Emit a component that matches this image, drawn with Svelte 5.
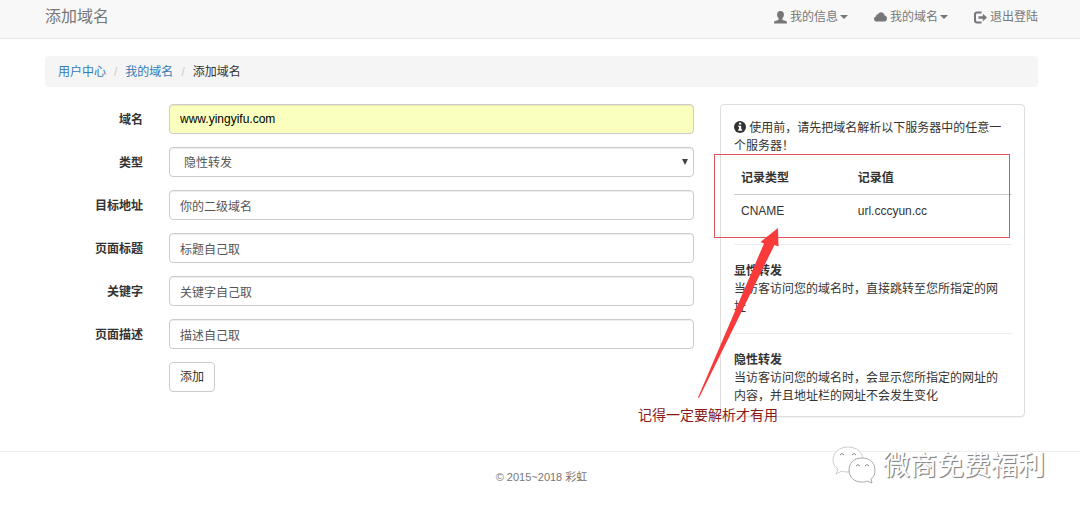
<script lang="ts">
	let domain = $state("www.yingyifu.com");
	let forwardType = $state("hidden");
	let target = $state("你的二级域名");
	let pageTitle = $state("标题自己取");
	let keywords = $state("关键字自己取");
	let description = $state("描述自己取");

	const records = [{ type: "CNAME", value: "url.cccyun.cc" }];

	function handleSubmit(e: SubmitEvent) {
		e.preventDefault();
	}
</script>

<header class="navbar">
	<div class="navbar-inner">
		<a class="brand" href="#top">添加域名</a>
		<nav class="nav">
			<a href="#info">
				<svg class="icon" viewBox="0 0 13 13" aria-hidden="true">
					<path
						d="M6.500 0C4.200 0 3.100 1.500 3.100 3.500c0 1.600.6 2.900 1.500 3.700v1.200C4.600 9.100 1.400 9.500.6 10.300c-.4.4-.6 1-.6 2.200h13c0-1.200-.2-1.800-.6-2.200-.8-.8-4-1.200-4-1.900V7.200c.9-.8 1.500-2.100 1.500-3.700C9.900 1.500 8.800 0 6.500 0z"
					/>
				</svg>
				<span>我的信息</span>
				<i class="caret"></i>
			</a>
			<a href="#domains">
				<svg class="icon" viewBox="0 0 13 13" aria-hidden="true">
					<path
						d="M2.800 10.500C1.200 10.500 0 9.400 0 7.900c0-1.300.9-2.300 2.100-2.500C2 3.900 3 3 4 3.200 4.600 1.900 5.700 1.200 7 1.200c2 0 3.500 1.500 3.600 3.400C12 4.700 13 5.900 13 7.400c0 1.700-1.300 3.100-2.900 3.100z"
					/>
				</svg>
				<span>我的域名</span>
				<i class="caret"></i>
			</a>
			<a href="#logout">
				<svg class="icon" viewBox="0 0 13 13" aria-hidden="true">
					<path
						d="M7.600 1.600H3.200C1.900 1.600 1 2.500 1 3.800v5.400c0 1.300.9 2.200 2.200 2.200h4.400"
						fill="none"
						stroke="currentColor"
						stroke-width="2"
					/>
					<path d="M4.500 5.300h4.300V2.800L13 6.500l-4.200 3.700V7.700H4.500z" />
				</svg>
				<span>退出登陆</span>
			</a>
		</nav>
	</div>
</header>

<main class="container">
	<ol class="breadcrumb">
		<li><a href="#home">用户中心</a></li>
		<li><a href="#domains">我的域名</a></li>
		<li>添加域名</li>
	</ol>

	<div class="columns">
		<form class="domain-form" onsubmit={handleSubmit}>
			<label for="domain">域名</label>
			<input id="domain" class="autofilled" type="text" bind:value={domain} />

			<label for="type">类型</label>
			<div class="select-wrap">
				<select id="type" bind:value={forwardType}>
					<option value="hidden">隐性转发</option>
					<option value="visible">显性转发</option>
				</select>
			</div>

			<label for="target">目标地址</label>
			<input id="target" type="text" bind:value={target} />

			<label for="title">页面标题</label>
			<input id="title" type="text" bind:value={pageTitle} />

			<label for="keywords">关键字</label>
			<input id="keywords" type="text" bind:value={keywords} />

			<label for="description">页面描述</label>
			<input id="description" type="text" bind:value={description} />

			<button type="submit">添加</button>
		</form>

		<aside class="panel">
			<p>
				<svg class="icon info" viewBox="0 0 12 12" aria-hidden="true">
					<circle cx="6" cy="6" r="6" />
					<path d="M5 1.800h2.200v1.800H5zM4.200 4.700h3v3.600h.9v1.400H4.200V8.300H5V6h-.8z" fill="#fff" />
				</svg>
				使用前，请先把域名解析以下服务器中的任意一个服务器！
			</p>

			<div class="records">
				<table>
					<thead>
						<tr><th>记录类型</th><th>记录值</th></tr>
					</thead>
					<tbody>
						{#each records as record}
							<tr><td>{record.type}</td><td>{record.value}</td></tr>
						{/each}
					</tbody>
				</table>
				<div class="highlight"></div>
			</div>

			<hr />
			<p>
				<strong>显性转发</strong><br />
				当访客访问您的域名时，直接跳转至您所指定的网址
			</p>
			<hr />
			<p>
				<strong>隐性转发</strong><br />
				当访客访问您的域名时，会显示您所指定的网址的内容，并且地址栏的网址不会发生变化
			</p>

			<svg class="arrow" viewBox="0 0 84 172" aria-hidden="true">
				<path d="M1 169.500 67 15.500 63.500 14 81 0l.5 18.500-4-1.500L72 28 2 170z" />
			</svg>
			<span class="note">记得一定要解析才有用</span>
		</aside>
	</div>
</main>

<footer class="footer">
	<p>© 2015~2018 彩虹</p>
	<div class="watermark">
		<svg viewBox="0 0 46 40" aria-hidden="true">
			<path
				class="bubble"
				d="M16 1C7 1 1 7 1 14c0 4 2 7 5 9l-2 5 6-3c2 1 4 1 6 1 9 0 15-5 15-12S25 1 16 1z"
			/>
			<path
				class="bubble front"
				d="M30 12c-8 0-13 5-13 12s5 12 13 12c2 0 4 0 5-1l5 2-1-4c3-2 4-5 4-9 0-7-5-12-13-12z"
			/>
			<path class="eye" d="M8 9q2-3 4 0M20 9q2-3 4 0M24 20q2-3 4 0M33 20q2-3 4 0" />
		</svg>
		<span>微商免费福利</span>
	</div>
</footer>

<style>
	:global(body) {
		background: #fff;
		color: #333;
		font-family: "Liberation Sans", "Noto Sans CJK SC", sans-serif;
		font-size: 12px;
		line-height: 18px;
	}

	p {
		margin: 0;
	}

	a {
		color: #337ab7;
		text-decoration: none;
	}

	.icon {
		width: 13px;
		height: 13px;
		fill: currentColor;
	}

	/* Navbar */
	.navbar {
		background: #f8f8f8;
		border-bottom: 1px solid #e7e7e7;
	}

	.navbar-inner {
		display: flex;
		align-items: center;
		justify-content: space-between;
		margin: 0 42px 0 45px;
		padding-bottom: 4px;
		line-height: 34px;
	}

	.navbar a {
		color: #777;
	}

	.brand {
		font-size: 16px;
	}

	.nav {
		display: flex;
		gap: 26px;
	}

	.nav a {
		display: flex;
		align-items: center;
		gap: 2px;
	}

	.nav .icon {
		margin-right: 1px;
	}

	.caret {
		border-top: 4px solid;
		border-left: 4px solid transparent;
		border-right: 4px solid transparent;
	}

	/* Content */
	.container {
		margin: 17px 42px 34px 45px;
	}

	.breadcrumb {
		display: flex;
		margin: 0 0 17px;
		padding: 7px 13px 6px;
		background: #f5f5f5;
		border-radius: 4px;
		list-style: none;
	}

	.breadcrumb li + li::before {
		content: "/";
		padding: 0 8px;
		color: #ccc;
	}

	.columns {
		display: grid;
		grid-template-columns: 649fr 305fr;
		align-items: start;
		gap: 26px;
		padding-right: 13px;
	}

	.domain-form {
		display: grid;
		grid-template-columns: 98px 1fr;
		align-items: center;
		gap: 13px 26px;
	}

	label {
		padding-top: 1px;
		text-align: right;
		font-weight: bold;
	}

	input,
	select,
	button {
		height: 30px;
		box-sizing: border-box;
		border: 1px solid #ccc;
		border-radius: 4px;
		background: #fff;
		font: inherit;
	}

	input,
	select {
		width: 100%;
		padding: 0 10px;
		color: #555;
		box-shadow: inset 0 1px 1px rgba(0, 0, 0, 0.075);
	}

	.autofilled {
		background: #faffbd;
		color: #000;
	}

	.select-wrap {
		position: relative;
	}

	.select-wrap::after {
		content: "";
		position: absolute;
		top: 12px;
		right: 6px;
		border-top: 6px solid #444;
		border-left: 3px solid transparent;
		border-right: 3px solid transparent;
		pointer-events: none;
	}

	select {
		display: block;
		appearance: none;
		padding: 2px 14px 0;
	}

	button {
		grid-column: 2;
		justify-self: start;
		padding: 0 10px;
		color: #333;
	}

	/* Side panel */
	.panel {
		position: relative;
		padding: 14px 12px 11px 13px;
		border: 1px solid #ddd;
		border-radius: 4px;
		box-shadow: 0 1px 1px rgba(0, 0, 0, 0.05);
	}

	.panel p {
		padding-right: 6px;
	}

	.info {
		width: 12px;
		height: 12px;
		vertical-align: -1px;
	}

	.records {
		position: relative;
		margin-top: 7px;
	}

	table {
		width: 100%;
		border-collapse: collapse;
		table-layout: fixed;
	}

	th,
	td {
		padding: 7px;
		text-align: left;
	}

	th {
		border-bottom: 1px solid #ccc;
	}

	th:first-child {
		width: 42%;
		box-sizing: border-box;
	}

	hr {
		margin: 17px 0;
		border: 0;
		border-top: 1px solid #eee;
	}

	.highlight {
		position: absolute;
		inset: -8px 2px -11px -20px;
		border: 1px solid #e0525a;
	}

	.arrow {
		position: absolute;
		top: 123px;
		left: -24px;
		width: 84px;
		height: 172px;
		fill: #f93a3a;
	}

	.note {
		position: absolute;
		bottom: -8px;
		left: -83px;
		color: #8b1a1a;
		font-size: 14px;
		white-space: nowrap;
	}

	/* Footer */
	.footer {
		position: relative;
		padding: 16px 42px 20px 45px;
		border-top: 1px solid #eee;
		color: #777;
		font-size: 11px;
		text-align: center;
	}

	.watermark {
		position: absolute;
		top: -8px;
		right: 35px;
		display: flex;
		align-items: flex-start;
		gap: 5px;
		color: #fff;
		font-size: 27px;
		line-height: 44px;
		text-shadow:
			1px 1px 0 #888,
			1px 1px 1px #999;
	}

	.watermark svg {
		width: 46px;
		height: 40px;
		margin-top: 2px;
		fill: none;
		stroke-linejoin: round;
	}

	.bubble {
		fill: #fff;
		stroke: #ccc;
	}

	.front {
		stroke: #aaa;
	}

	.eye {
		stroke: #888;
	}
</style>
